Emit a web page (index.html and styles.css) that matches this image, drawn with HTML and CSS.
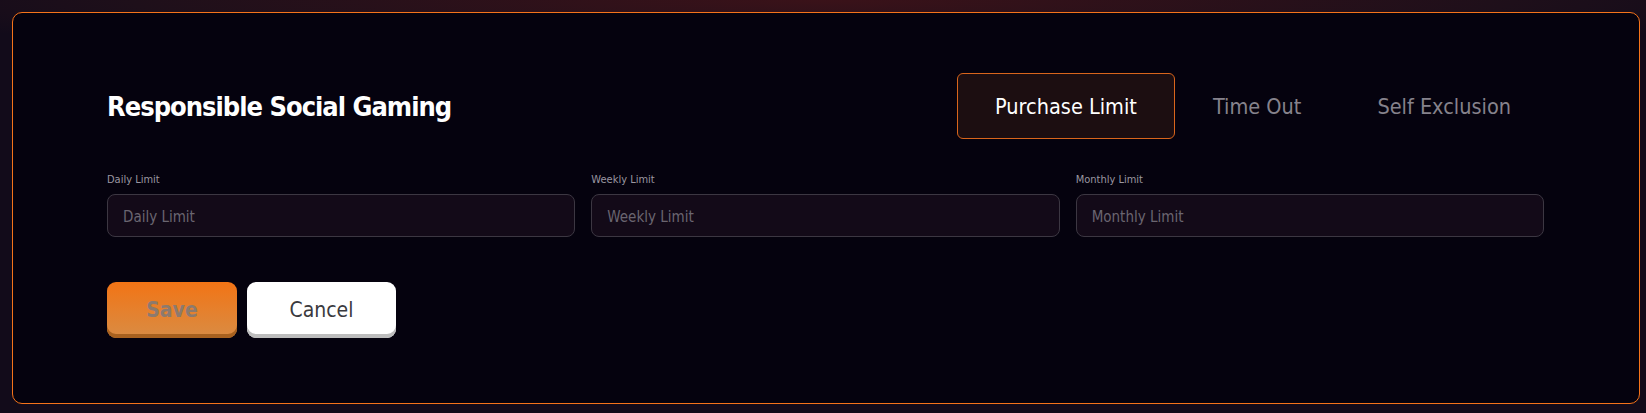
FILE: index.html
```html
<!DOCTYPE html>
<html lang="en">
<head>
  <meta charset="UTF-8">
  <meta name="viewport" content="width=device-width, initial-scale=1.0">
  <title>Responsible Social Gaming</title>
  <link rel="stylesheet" href="styles.css">
</head>
<body>
  <div class="panel">
    <!-- Header with title and tabs -->
    <div class="panel-header">
      <h1>Responsible Social Gaming</h1>
      <div class="tabs">
        <button class="tab active">Purchase Limit</button>
        <button class="tab">Time Out</button>
        <button class="tab">Self Exclusion</button>
      </div>
    </div>

    <!-- Limit fields -->
    <div class="limits">
      <div class="field">
        <label for="daily">Daily Limit</label>
        <input id="daily" type="text" placeholder="Daily Limit">
      </div>
      <div class="field">
        <label for="weekly">Weekly Limit</label>
        <input id="weekly" type="text" placeholder="Weekly Limit">
      </div>
      <div class="field">
        <label for="monthly">Monthly Limit</label>
        <input id="monthly" type="text" placeholder="Monthly Limit">
      </div>
    </div>

    <div class="actions">
      <button class="btn save" disabled>Save</button>
      <button class="btn cancel">Cancel</button>
    </div>
  </div>
</body>
</html>
```

FILE: styles.css
```css
/* General reset */
* {
  margin: 0;
  padding: 0;
  box-sizing: border-box;
}

body {
  font-family: "DejaVu Sans Condensed", "DejaVu Sans", sans-serif;
  background: radial-gradient(ellipse 60% 60px at 50% 0, #3a1219 0%, #1e0f1a 70%, #120b1a 100%), #120b1a;
  background-color: #120b1a;
  color: #f0f0f0;
  height: 413px;
  padding: 12px 6px 9px 12px;
}

.panel {
  height: 392px;
  background: #05020e;
  border: 1px solid #f5731a;
  border-radius: 10px;
  padding: 60px 95px 0 94px;
}

.panel-header {
  display: flex;
  align-items: center;
  justify-content: space-between;
  height: 66px;
}

h1 {
  font-size: 27px;
  font-weight: 700;
  letter-spacing: -1px;
  color: #ffffff;
}

.tabs {
  display: flex;
  height: 66px;
  margin-right: -5px;
}

.tab {
  font-family: inherit;
  font-size: 21.5px;
  color: #86828c;
  background: none;
  border: 1px solid transparent;
  border-radius: 6px;
  padding: 0 37px;
  cursor: pointer;
}

.tab.active {
  color: #ffffff;
  background: #1c0e11;
  border-color: #d9651c;
}

.limits {
  display: flex;
  gap: 16px;
  margin-top: 33px;
}

.field {
  flex: 1;
  display: flex;
  flex-direction: column;
}

.field label {
  font-size: 11px;
  line-height: 16px;
  color: #9a96a0;
  margin-bottom: 6px;
}

.field input {
  height: 43px;
  background: #130a18;
  border: 1px solid #3c3742;
  border-radius: 8px;
  padding: 2px 15px 0;
  font-family: inherit;
  font-size: 15px;
  color: #d0d0d0;
  outline: none;
}

.field input::placeholder {
  color: #6a6570;
}

.actions {
  display: flex;
  gap: 10px;
  margin-top: 45px;
}

.btn {
  height: 56px;
  border: none;
  border-radius: 9px;
  font-family: inherit;
  font-size: 21px;
  cursor: pointer;
}

.btn.save {
  width: 130px;
  font-weight: 700;
  color: #8c7a6e;
  background: linear-gradient(to bottom, #f27415, #d98c44);
  box-shadow: inset 0 -4px 0 #a8611f;
  cursor: default;
}

.btn.cancel {
  width: 149px;
  color: #3a3a3e;
  background: #ffffff;
  box-shadow: inset 0 -4px 0 #bdbdbd;
}
```
